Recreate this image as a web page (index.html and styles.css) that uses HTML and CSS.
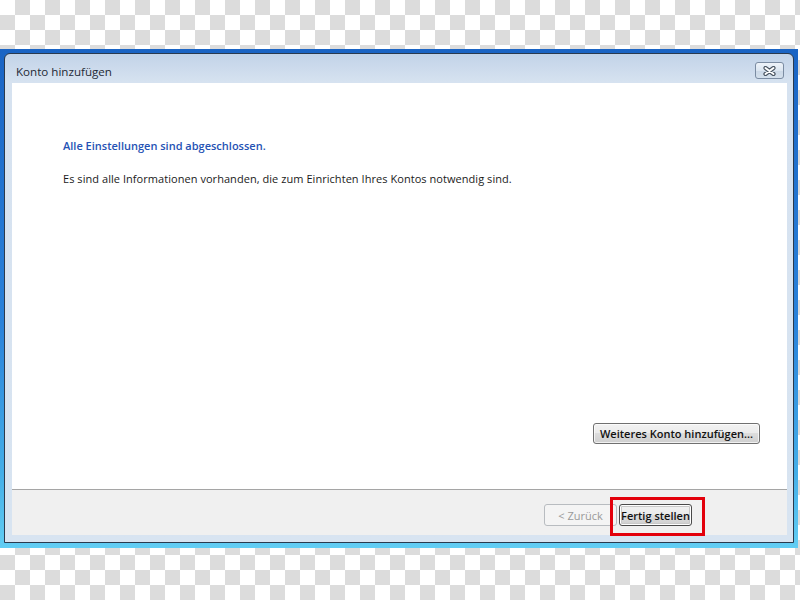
FILE: index.html
```html
<!DOCTYPE html>
<html lang="de">
<head>
<meta charset="utf-8">
<title>Konto hinzufügen</title>
<link rel="stylesheet" href="styles.css">
</head>
<body>
<div class="window">
  <div class="frame">
    <div class="titlebar">
      <span class="title">Konto hinzufügen</span>
      <button class="close" aria-label="Schließen">
        <svg width="13" height="10" viewBox="0 0 13 10">
          <path d="M2.5 2 L10.5 8 M10.5 2 L2.5 8" stroke="#4a5562" stroke-width="4.2" stroke-linecap="round" fill="none"/>
          <path d="M2.5 2 L10.5 8 M10.5 2 L2.5 8" stroke="#ffffff" stroke-width="2" stroke-linecap="round" fill="none"/>
        </svg>
      </button>
    </div>
    <div class="client">
      <div class="content">
        <h1 class="heading">Alle Einstellungen sind abgeschlossen.</h1>
        <p class="text">Es sind alle Informationen vorhanden, die zum Einrichten Ihres Kontos notwendig sind.</p>
        <div class="extra">
          <button class="btn btn-wide">Weiteres Konto hinzufügen...</button>
        </div>
      </div>
      <div class="footer">
        <button class="btn btn-nav btn-disabled">&lt; Zurück</button>
        <button class="btn btn-nav btn-default">Fertig stellen</button>
        <span class="highlight"></span>
      </div>
    </div>
  </div>
</div>
</body>
</html>
```

FILE: styles.css
```css
html, body {
  margin: 0;
  padding: 0;
}

body {
  width: 800px;
  height: 600px;
  overflow: hidden;
  background-color: #ffffff;
  background-image: conic-gradient(#dcdcdc 25%, #ffffff 0 50%, #dcdcdc 0 75%, #ffffff 0);
  background-size: 30px 30px;
  background-position: 0 0;
  font-family: "Open Sans", "Noto Sans", sans-serif;
}

.window {
  margin-top: 49px;
  width: 798px;
  height: 499px;
  box-sizing: border-box;
  padding: 4px 4px 5px 4px;
  background: linear-gradient(to bottom, #1a64c4 0%, #2a82da 55%, #44aee8 85%, #62cdf3 100%);
}

.frame {
  height: 100%;
  box-sizing: border-box;
  border: 1px solid #2a3a4e;
  border-radius: 6px 6px 0 0;
  background: linear-gradient(to bottom, #c2d3e8 0px, #d6e2f0 28px, #d8e4f1 100%);
  padding: 0 6px 7px 7px;
  display: flex;
  flex-direction: column;
}

.titlebar {
  height: 29px;
  flex: none;
  display: flex;
  justify-content: space-between;
  align-items: flex-start;
}

.title {
  margin: 10px 0 0 4px;
  font-size: 11.6px;
  line-height: 16px;
  color: #1f2a36;
}

.close {
  margin: 8px 3px 0 0;
  width: 29px;
  height: 17px;
  padding: 0;
  box-sizing: border-box;
  border: 1px solid #7b8ca2;
  border-radius: 3px;
  background: linear-gradient(to bottom, #eef3f9 0%, #dce6f1 50%, #cbd8e7 51%, #d4e0ec 100%);
  display: flex;
  align-items: center;
  justify-content: center;
}

.close svg {
  display: block;
}

.client {
  flex: 1;
  display: flex;
  flex-direction: column;
  background: #ffffff;
}

.content {
  flex: 1;
  display: flex;
  flex-direction: column;
  padding: 55px 27px 45px 51px;
}

.heading {
  margin: 0;
  font-size: 11px;
  line-height: 16px;
  font-weight: 600;
  color: #2552b4;
}

.text {
  margin: 17px 0 0 0;
  font-size: 11px;
  line-height: 16px;
  letter-spacing: 0.05px;
  color: #1a1a1a;
}

.extra {
  margin-top: auto;
  display: flex;
  justify-content: flex-end;
}

.btn {
  height: 22px;
  box-sizing: border-box;
  padding: 0;
  font-family: "Open Sans", "Noto Sans", sans-serif;
  font-size: 11px;
  font-weight: 600;
  color: #111111;
  border: 1px solid #707070;
  border-radius: 3px;
  background: linear-gradient(to bottom, #f2f2f2 0%, #ebebeb 48%, #dddddd 50%, #cfcfcf 100%);
  box-shadow: inset 0 0 0 1px rgba(255, 255, 255, 0.7);
}

.btn-wide {
  width: 167px;
  height: 21px;
}

.footer {
  position: relative;
  flex: none;
  height: 46px;
  box-sizing: border-box;
  border-top: 1px solid #a5a5a5;
  background: #f0f0f0;
  display: flex;
  justify-content: flex-end;
  align-items: flex-start;
  gap: 2px;
  padding: 14px 95px 0 0;
}

.btn-nav {
  width: 73px;
}

.btn-disabled {
  color: #9a9a9a;
  font-weight: 400;
  border-color: #b8bcc0;
  background: #f4f4f4;
  box-shadow: none;
}

.btn-default {
  border-color: #4a4a4a;
  box-shadow: inset 0 0 0 1px #ffffff, inset 0 0 0 2px #c8c8c8;
}

.highlight {
  position: absolute;
  left: 598px;
  top: 7px;
  width: 95px;
  height: 39px;
  box-sizing: border-box;
  border: 3px solid #e3000b;
}
```
